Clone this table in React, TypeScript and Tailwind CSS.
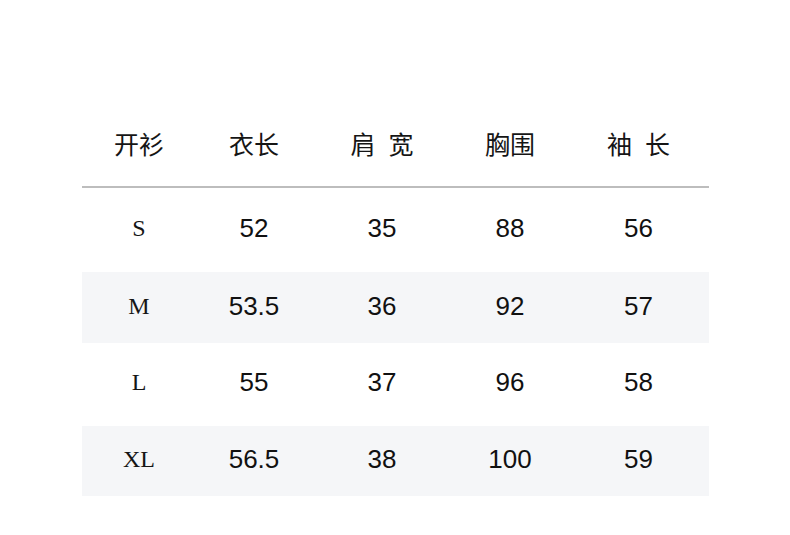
import React from 'react';

// Size chart: cardigan measurements (cm)

const headers = [['开衫'], ['衣长'], ['肩', '宽'], ['胸围'], ['袖', '长']];

const rows = [
  { size: 'S', values: ['52', '35', '88', '56'], shaded: false, h: 'h-[84px]', pb: 'pb-[4px]' },
  { size: 'M', values: ['53.5', '36', '92', '57'], shaded: true, h: 'h-[71px]', pb: 'pb-[4px]' },
  { size: 'L', values: ['55', '37', '96', '58'], shaded: false, h: 'h-[83px]', pb: 'pb-[6px]' },
  { size: 'XL', values: ['56.5', '38', '100', '59'], shaded: true, h: 'h-[70px]', pb: 'pb-[4px]' },
];

const grid = 'grid grid-cols-[114px_116px_140px_116px_1fr]';

export default function App() {
  return (
    <div className="w-[790px] h-[535px] bg-white overflow-hidden pt-[105px] pl-[82px]">
      <div className="w-[627px]">
        {/* Header */}
        <div className={`${grid} h-[81px] items-center pb-[4px]`}>
          {headers.map((parts, i) => (
            <div
              key={i}
              className="flex justify-center gap-[13px] text-[25px] leading-none text-[#151515] font-['Noto_Sans_CJK_SC',sans-serif]"
            >
              {parts.map((p) => (
                <span key={p}>{p}</span>
              ))}
            </div>
          ))}
        </div>
        <div className="h-[2px] bg-[#bdbdbd]" />

        {/* Rows */}
        {rows.map((r) => (
          <div
            key={r.size}
            className={`${grid} ${r.h} ${r.pb} items-center ${r.shaded ? 'bg-[#f5f6f8]' : 'bg-white'}`}
          >
            <div className="text-center text-[24px] leading-none text-[#151515] font-['Liberation_Serif',serif]">
              {r.size}
            </div>
            {r.values.map((v, i) => (
              <div
                key={i}
                className="text-center text-[26px] leading-none text-[#111] font-['Liberation_Sans',Arial,sans-serif]"
              >
                {v}
              </div>
            ))}
          </div>
        ))}
      </div>
    </div>
  );
}
